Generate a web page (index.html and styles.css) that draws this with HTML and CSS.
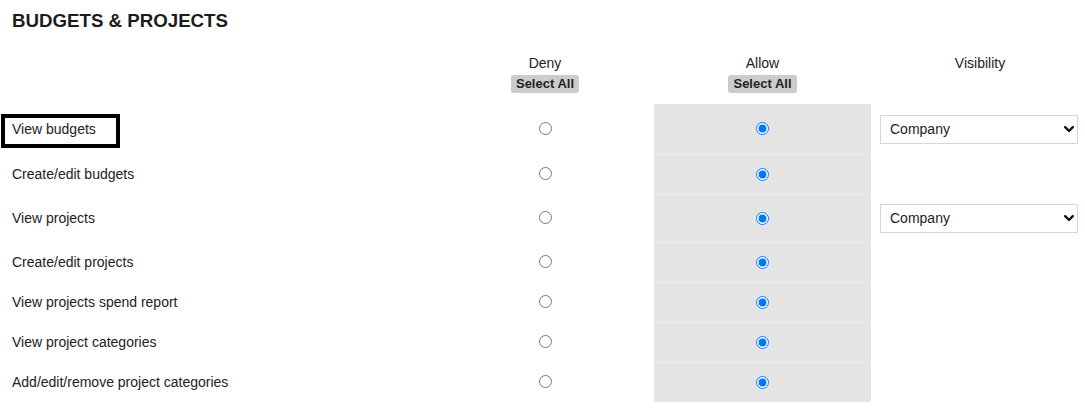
FILE: index.html
```html
<!DOCTYPE html>
<html>
<head>
<meta charset="utf-8">
<link rel="stylesheet" href="styles.css">
</head>
<body>
<div class="page">
  <h1 class="title">BUDGETS &amp; PROJECTS</h1>
  <div class="perm-table">
    <div class="row head">
      <div class="cell label"></div>
      <div class="cell col-head">
        <span class="col-name">Deny</span>
        <button class="select-all">Select All</button>
      </div>
      <div class="cell col-head">
        <span class="col-name">Allow</span>
        <button class="select-all">Select All</button>
      </div>
      <div class="cell col-head vis-head">
        <span class="col-name">Visibility</span>
      </div>
    </div>

    <div class="row tall first">
      <div class="cell label"><span>View budgets</span><span class="highlight"></span></div>
      <div class="cell radio"><input type="radio" name="r1"></div>
      <div class="cell radio allow"><input type="radio" name="r1" checked></div>
      <div class="cell vis">
        <div class="select-wrap">
          <select><option>Company</option></select>
          <svg class="chev" width="10" height="7" viewBox="0 0 10 7"><path d="M1.2 1.2 L5 5 L8.8 1.2" fill="none" stroke="#111" stroke-width="2.4" stroke-linecap="round" stroke-linejoin="round"/></svg>
        </div>
      </div>
    </div>

    <div class="row">
      <div class="cell label">Create/edit budgets</div>
      <div class="cell radio"><input type="radio" name="r2"></div>
      <div class="cell radio allow"><input type="radio" name="r2" checked></div>
      <div class="cell vis"></div>
    </div>

    <div class="row tall2">
      <div class="cell label">View projects</div>
      <div class="cell radio"><input type="radio" name="r3"></div>
      <div class="cell radio allow"><input type="radio" name="r3" checked></div>
      <div class="cell vis">
        <div class="select-wrap">
          <select><option>Company</option></select>
          <svg class="chev" width="10" height="7" viewBox="0 0 10 7"><path d="M1.2 1.2 L5 5 L8.8 1.2" fill="none" stroke="#111" stroke-width="2.4" stroke-linecap="round" stroke-linejoin="round"/></svg>
        </div>
      </div>
    </div>

    <div class="row">
      <div class="cell label">Create/edit projects</div>
      <div class="cell radio"><input type="radio" name="r4"></div>
      <div class="cell radio allow"><input type="radio" name="r4" checked></div>
      <div class="cell vis"></div>
    </div>

    <div class="row">
      <div class="cell label">View projects spend report</div>
      <div class="cell radio"><input type="radio" name="r5"></div>
      <div class="cell radio allow"><input type="radio" name="r5" checked></div>
      <div class="cell vis"></div>
    </div>

    <div class="row">
      <div class="cell label">View project categories</div>
      <div class="cell radio"><input type="radio" name="r6"></div>
      <div class="cell radio allow"><input type="radio" name="r6" checked></div>
      <div class="cell vis"></div>
    </div>

    <div class="row">
      <div class="cell label">Add/edit/remove project categories</div>
      <div class="cell radio"><input type="radio" name="r7"></div>
      <div class="cell radio allow"><input type="radio" name="r7" checked></div>
      <div class="cell vis"></div>
    </div>
  </div>
</div>
</body>
</html>
```

FILE: styles.css
```css
html, body {
  margin: 0;
  padding: 0;
  background: #ffffff;
  overflow: hidden;
}

body {
  font-family: "Liberation Sans", Arial, sans-serif;
  font-size: 14px;
  color: #222222;
}

.page {
  width: 1089px;
}

.title {
  margin: 0;
  padding: 10px 0 0 12px;
  font-size: 18.7px;
  line-height: 21px;
  font-weight: bold;
  color: #1c1c1c;
}

.perm-table {
  margin-top: 24px;
}

.row {
  display: grid;
  grid-template-columns: 436px 218px 217px 218px;
  height: 40px;
}

.row.tall {
  height: 50px;
}

.row.tall2 {
  height: 48px;
}

.row.head {
  height: auto;
  padding-bottom: 11px;
}

.cell {
  display: flex;
  align-items: center;
}

.label {
  padding-left: 12px;
  position: relative;
}

.highlight {
  position: absolute;
  left: 1px;
  top: 10px;
  width: 111px;
  height: 26px;
  border: 4px solid #000000;
}

.col-head {
  flex-direction: column;
  align-items: center;
}

.col-name {
  line-height: 16px;
  height: 16px;
}

.select-all {
  margin-top: 4px;
  height: 18px;
  padding: 0 5px;
  border: none;
  border-radius: 3px;
  background: #cccccc;
  font-family: "Liberation Sans", Arial, sans-serif;
  font-size: 13px;
  font-weight: bold;
  line-height: 18px;
  color: #222222;
}

.radio {
  justify-content: center;
}

.radio input {
  margin: 0 0 1px 0;
  width: 13px;
  height: 13px;
}

.allow {
  background: #e4e4e4;
  border-top: 1px solid #ececec;
}

.first .allow {
  border-top: none;
}

.vis {
  padding-left: 9px;
}

.select-wrap {
  position: relative;
  width: 198px;
  height: 29px;
}

.select-wrap select {
  -webkit-appearance: none;
  appearance: none;
  width: 198px;
  height: 29px;
  margin: 0;
  padding: 0 0 0 9px;
  border: 1px solid #c8dbe3;
  border-radius: 0;
  background: #ffffff;
  font-family: "Liberation Sans", Arial, sans-serif;
  font-size: 14px;
  color: #222222;
}

.chev {
  position: absolute;
  right: 4px;
  top: 11px;
}
```
